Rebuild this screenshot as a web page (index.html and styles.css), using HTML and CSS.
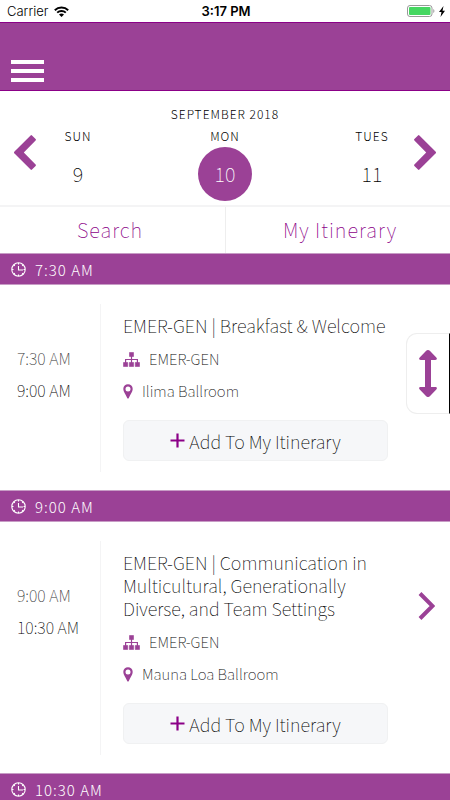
FILE: index.html
```html
<!DOCTYPE html>
<html lang="en">
<head>
<meta charset="utf-8">
<meta name="viewport" content="width=device-width, initial-scale=1">
<title>Schedule</title>
<link rel="stylesheet" href="styles.css">
</head>
<body>
<svg class="sprite" aria-hidden="true">
  <symbol id="clock" viewBox="0 0 15 15"><circle cx="7.500" cy="7.500" r="6.700" fill="none" stroke="currentColor" stroke-width="1.100"/><path d="M7.500 4v4H12M7.500 1v1.500M7.500 12.500V14M1 7.500h1.500M12.500 7.500H14M3 3l.8.8M12 3l-.8.8M3 12l.8-.8M12 12l-.8-.8" fill="none" stroke="currentColor" stroke-width="1.100"/></symbol>
  <symbol id="tree" viewBox="0 0 17 15"><path d="M6.500.5h4v4h-4zM.5 10.500h4.200v4H.5zM6.400 10.500h4.200v4H6.400zM12.300 10.500h4.200v4h-4.200z" fill="currentColor" stroke="currentColor" stroke-width=".6" stroke-linejoin="round"/><path d="M8.500 4v7M2.600 11V7.500h11.800V11" fill="none" stroke="currentColor" stroke-width="1.200"/></symbol>
  <symbol id="pin" viewBox="0 0 10 15"><path d="M5 .2A4.700 4.700 0 0 0 .3 4.900C.3 7.500 2.500 10 4.200 14a.85.85 0 0 0 1.600 0C7.500 10 9.700 7.500 9.700 4.900A4.700 4.700 0 0 0 5 .2zM5 2.500a2.500 2.500 0 1 1 0 5 2.500 2.500 0 0 1 0-5z" fill="currentColor" fill-rule="evenodd"/></symbol>
  <symbol id="plus" viewBox="0 0 15 15"><path d="M7.500.5v14M.5 7.500h14" stroke="currentColor" stroke-width="2.200" fill="none"/></symbol>
  <symbol id="chevron" viewBox="0 0 22 35"><path d="M5.400.4 21.500 16.600a1.200 1.200 0 0 1 0 1.800L5.400 34.600a1 1 0 0 1-1.400 0L.4 31a1 1 0 0 1 0-1.400L12.200 17.500.4 5.400A1 1 0 0 1 .4 4L4 .4a1 1 0 0 1 1.400 0z" fill="currentColor"/></symbol>
</svg>

<div class="status">
  <div class="status-left"><span>Carrier</span>
    <svg class="wifi" viewBox="0 0 15 11" aria-hidden="true"><path d="M.8 4.200a9.600 9.600 0 0 1 13.400 0M3.200 6.700a6.100 6.100 0 0 1 8.600 0" fill="none" stroke="#000" stroke-width="1.900"/><path d="M5 8.600a3.600 3.600 0 0 1 5 0L7.500 11z"/></svg>
  </div>
  <time class="status-time">3:17 PM</time>
  <div class="status-right">
    <svg class="battery" viewBox="0 0 28 12" aria-hidden="true"><rect x=".5" y=".5" width="24.500" height="11" rx="2.500" fill="#fff" stroke="#999"/><rect x="2" y="2" width="21.500" height="8" rx="1" fill="#45d761"/><path d="M26.300 4c1.500.5 1.500 3.500 0 4z" fill="#999"/></svg>
    <svg class="bolt" viewBox="0 0 6 11" aria-hidden="true"><path d="M4.500 0 0 6h2.500L1.500 11 6 4.700H3.500z"/></svg>
  </div>
</div>

<header class="header">
  <button class="menu" type="button" aria-label="Menu"><span></span><span></span><span></span></button>
</header>

<main>
  <section class="calendar" aria-label="Date">
    <button class="arrow arrow-prev" type="button" aria-label="Previous day"><svg viewBox="0 0 22 35"><use href="#chevron"/></svg></button>
    <div class="dates">
      <h1 class="month">SEPTEMBER 2018</h1>
      <div class="days">
        <button class="day" type="button"><span class="weekday">SUN</span><span class="number">9</span></button>
        <button class="day" type="button" aria-pressed="true"><span class="weekday">MON</span><span class="number selected">10</span></button>
        <button class="day" type="button"><span class="weekday">TUES</span><span class="number">11</span></button>
      </div>
    </div>
    <button class="arrow" type="button" aria-label="Next day"><svg viewBox="0 0 22 35"><use href="#chevron"/></svg></button>
  </section>

  <nav class="tabs">
    <a href="#search">Search</a>
    <a href="#itinerary">My Itinerary</a>
  </nav>

  <h2 class="slot"><svg class="clock"><use href="#clock"/></svg>7:30 AM</h2>
  <article class="session">
    <div class="times"><time class="start">7:30 AM</time><time>9:00 AM</time></div>
    <div class="details">
      <h3 class="title">EMER-GEN | Breakfast &amp; Welcome</h3>
      <p class="meta"><svg class="tree"><use href="#tree"/></svg>EMER-GEN</p>
      <p class="meta"><svg class="pin"><use href="#pin"/></svg>Ilima Ballroom</p>
      <button class="add" type="button"><svg class="plus"><use href="#plus"/></svg>Add To My Itinerary</button>
    </div>
  </article>

  <h2 class="slot"><svg class="clock"><use href="#clock"/></svg>9:00 AM</h2>
  <article class="session">
    <div class="times"><time class="start">9:00 AM</time><time>10:30 AM</time></div>
    <div class="details">
      <h3 class="title">EMER-GEN | Communication in Multicultural, Generationally Diverse, and Team Settings</h3>
      <p class="meta"><svg class="tree"><use href="#tree"/></svg>EMER-GEN</p>
      <p class="meta"><svg class="pin"><use href="#pin"/></svg>Mauna Loa Ballroom</p>
      <button class="add" type="button"><svg class="plus"><use href="#plus"/></svg>Add To My Itinerary</button>
    </div>
    <a class="open" href="#session" aria-label="Open session"><svg viewBox="0 0 17 28"><path d="M2 1.500 14.500 14 2 26.500" fill="none" stroke="currentColor" stroke-width="4"/></svg></a>
  </article>

  <h2 class="slot"><svg class="clock"><use href="#clock"/></svg>10:30 AM</h2>
</main>

<button class="scroller" type="button" aria-label="Scroll"><svg viewBox="0 0 18 47"><path d="M9 0c.8 0 1.300.3 1.800.8l6.500 6.800c1.200 1.300.5 2.400-1 2.400H12v27h4.300c1.500 0 2.200 1.100 1 2.400l-6.500 6.800c-1 1.100-2.600 1.100-3.600 0L.7 39.400C-.5 38.100.2 37 1.700 37H6V10H1.700C.2 10-.5 8.900.7 7.600L7.200.8C7.700.3 8.200 0 9 0z" fill="currentColor"/></svg></button>
</body>
</html>
```
FILE: styles.css
```css
:root {
  --purple: #9b4196;
  --deep: #8b0087;
  --line: #f4f4f5;
}

* {
  box-sizing: border-box;
}

body {
  margin: 0;
  background: #fff;
  color: #000;
  font-family: "Noto Sans CJK SC", sans-serif;
  font-weight: 100;
  overflow-x: hidden;
}

button {
  padding: 0;
  border: 0;
  background: none;
  color: inherit;
  font: inherit;
}

a {
  color: inherit;
  text-decoration: none;
}

h1,
h2,
h3,
p {
  margin: 0;
  font-weight: inherit;
}

svg {
  display: block;
  flex: none;
}

.sprite {
  position: absolute;
  width: 0;
  height: 0;
}

.status {
  display: grid;
  grid-template-columns: 1fr auto 1fr;
  align-items: center;
  height: 22px;
  padding: 0 5px 0 7px;
  color: #000;
  font-family: Inter, sans-serif;
  font-size: 13px;
  font-weight: 300;
  line-height: 22px;
}

.status-left,
.status-right {
  display: flex;
  align-items: center;
  gap: 6px;
}

.status-right {
  justify-content: flex-end;
  gap: 4px;
}

.status-time {
  font-weight: 600;
}

.wifi {
  width: 15px;
  height: 11px;
}

.battery {
  width: 28px;
  height: 12px;
}

.bolt {
  width: 6px;
  height: 11px;
}

.header {
  display: flex;
  align-items: flex-end;
  height: 69px;
  padding: 0 11px 8px;
  border: solid var(--deep);
  border-width: 1px 0;
  background: var(--purple);
}

.menu {
  display: flex;
  flex-direction: column;
  gap: 5px;
  width: 33px;
}

.menu span {
  height: 4px;
  background: #fff;
}

.calendar {
  display: flex;
  align-items: center;
  gap: 15px;
  padding: 12px 14px 4px;
}

.arrow {
  width: 22px;
  height: 35px;
  color: var(--purple);
}

.arrow svg {
  width: 22px;
  height: 35px;
}

.arrow-prev {
  transform: rotate(180deg);
}

.dates {
  flex: 1;
}

.month,
.weekday {
  font-size: 12px;
  font-weight: 300;
  line-height: 22px;
  letter-spacing: 1px;
  text-align: center;
}

.days {
  display: flex;
  justify-content: space-between;
}

.day {
  display: flex;
  flex-direction: column;
  align-items: center;
  width: 54px;
}

.number {
  width: 54px;
  height: 54px;
  border-radius: 50%;
  font-size: 20px;
  line-height: 54px;
}

.selected {
  background: var(--purple);
  color: #fff;
}

.tabs {
  display: grid;
  grid-template-columns: 1fr 1fr;
  border-top: 2px solid var(--line);
  color: var(--deep);
  font-size: 20px;
  line-height: 46px;
  letter-spacing: 1px;
  text-align: center;
}

.tabs a {
  padding-right: 5px;
}

.tabs a + a {
  padding: 0 0 0 4px;
  border-left: 1px solid #eee;
}

.slot {
  display: flex;
  align-items: center;
  gap: 9px;
  height: 32px;
  padding: 0 11px;
  border: solid #c79cc5;
  border-width: 1px 0;
  background: var(--purple);
  color: #fff;
  font-size: 15px;
  font-weight: 300;
  letter-spacing: 1px;
}

.clock {
  width: 15px;
  height: 15px;
}

.session {
  position: relative;
  display: flex;
  padding: 19px 62px 18px 17px;
}

.times {
  display: flex;
  flex-direction: column;
  width: 83px;
  padding-top: 38px;
  font-size: 16px;
  line-height: 32px;
}

.start {
  color: #333;
}

.details {
  flex: 1;
  padding: 10px 0 11px 22px;
  border-left: 1px solid var(--line);
}

.title {
  margin-bottom: 6px;
  font-size: 18px;
  line-height: 23px;
}

.meta {
  display: flex;
  align-items: center;
  gap: 9px;
  font-size: 15px;
  line-height: 32px;
}

.tree {
  width: 17px;
  height: 15px;
  color: var(--purple);
}

.pin {
  width: 10px;
  height: 15px;
  color: var(--purple);
}

.add {
  display: flex;
  align-items: center;
  justify-content: center;
  gap: 4px;
  width: 100%;
  height: 41px;
  margin-top: 13px;
  border: 1px solid #f0f1f2;
  border-radius: 6px;
  background: #f6f7f9;
  font-size: 18px;
}

.plus {
  width: 15px;
  height: 15px;
  color: var(--deep);
}

.open {
  position: absolute;
  top: 70px;
  right: 15px;
  color: var(--purple);
}

.open svg {
  width: 17px;
  height: 28px;
}

.scroller {
  position: fixed;
  top: 333px;
  right: 0;
  display: grid;
  place-items: center;
  width: 44px;
  height: 81px;
  border: 1px solid #eee;
  border-right: 1px solid #000;
  border-radius: 11px 0 0 11px;
  background: #fff;
  color: var(--purple);
}

.scroller svg {
  width: 18px;
  height: 47px;
}
```
